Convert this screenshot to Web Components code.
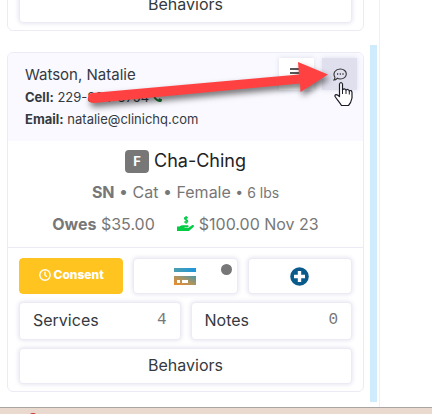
<!DOCTYPE html>
<html lang="en">
<head>
<meta charset="utf-8">
<meta name="viewport" content="width=device-width, initial-scale=1">
<title>Patients</title>
<style>
  html, body { height: 100%; margin: 0; }
  body { font: 16px/24px Inter, "Liberation Sans", sans-serif; color: #343a40; background: #fff; }
</style>
</head>
<body>
<patient-board>
  <patient-card>
    <action-grid slot="actions">
      <action-button wide>Behaviors</action-button>
    </action-grid>
  </patient-card>
  <patient-card>
    <owner-header slot="header" name="Watson, Natalie" cell="229-834-3754" email="natalie@clinichq.com"></owner-header>
    <pet-summary slot="summary" code="F" name="Cha-Ching"></pet-summary>
    <action-grid slot="actions">
      <action-button kind="consent">
        <svg width="12" height="12" viewBox="0 0 12 12" fill="none" stroke="#fff" stroke-width="1.4"><circle cx="6" cy="6" r="5.2"/><path d="M6 2.8V6.2L8 7.8"/></svg>
        Consent
      </action-button>
      <action-button kind="icon" label="Payment card" dot>
        <svg width="22" height="17" viewBox="0 0 22 17">
          <defs>
            <linearGradient id="top" x1="0" y1="0" x2="1" y2="0"><stop offset="0" stop-color="#4d9fae"/><stop offset="1" stop-color="#1f96dc"/></linearGradient>
            <linearGradient id="low" x1="0" y1="1" x2="1" y2="0"><stop offset="0" stop-color="#f28c28"/><stop offset=".5" stop-color="#ae9460"/><stop offset="1" stop-color="#4a97a8"/></linearGradient>
          </defs>
          <path d="M0 0H22V4H0z" fill="url(#top)"/>
          <path d="M0 8H22V17H0z" fill="url(#low)"/>
          <path d="M3 12H6V15H3zM8 12H14V15H8z" fill="#fff"/>
        </svg>
      </action-button>
      <action-button kind="icon" label="Add">
        <svg width="19" height="19" viewBox="0 0 19 19"><circle cx="9.5" cy="9.5" r="9.3" fill="#0b5a8c"/><path d="M7.8 4H11.2V7.8H15V11.2H11.2V15H7.8V11.2H4V7.8H7.8z" fill="#fff"/></svg>
      </action-button>
      <action-button half count="4">Services</action-button>
      <action-button half count="0">Notes</action-button>
      <action-button wide>Behaviors</action-button>
    </action-grid>
  </patient-card>
</patient-board>

<script>
const define = (tag, render) => customElements.define(tag, class extends HTMLElement {
  connectedCallback() {
    if (this.shadowRoot) return;
    this.attachShadow({ mode: "open" }).innerHTML = render(this);
  }
});

define("action-button", (el) => {
  const count = el.getAttribute("count");
  const label = el.getAttribute("label");
  return `
<style>
  :host { display: block; grid-column: span 4; }
  :host([half]) { grid-column: span 6; }
  :host([wide]) { grid-column: span 12; }
  button {
    box-sizing: border-box; width: 100%; height: 36px; padding: 0 13px 2px;
    display: flex; align-items: center; justify-content: center;
    position: relative; font: inherit; color: inherit; cursor: pointer;
    background: #fff; border: 1px solid #ebebf5; border-radius: 4px;
    box-shadow: 0 0 5px #dedeec;
  }
  :host([half]) button { height: 38px; justify-content: space-between; }
  :host([kind="icon"]) button { padding-bottom: 0; }
  :host([kind="consent"]) button {
    font-size: 12px; font-weight: 800; color: #fff;
    background: #ffc41f; border-color: #ffc41f; box-shadow: none;
  }
  .label { display: flex; align-items: center; gap: 3px; }
  .count { font-family: "Liberation Mono", monospace; color: #777; }
  .dot { position: absolute; top: 5px; right: 5px; width: 11px; height: 11px; border-radius: 50%; background: #777; }
</style>
<button type="button"${label ? ` aria-label="${label}"` : ""}>
  <span class="label"><slot></slot></span>
  ${count ? `<span class="count">${count}</span>` : ""}
  ${el.hasAttribute("dot") ? `<span class="dot"></span>` : ""}
</button>`;
});

define("action-grid", () => `
<style>
  :host { display: grid; grid-template-columns: repeat(12, 1fr); gap: 8px 10px; padding: 10px 11px 7px; }
</style>
<slot></slot>`);

define("owner-header", (el) => `
<style>
  :host { display: flex; justify-content: space-between; padding: 5px 6px 11px 17px; background: #f9f9ff; font-size: 13px; line-height: 22px; }
  .who { padding-top: 6px; }
  .name { font-size: 15px; }
  .tools { display: flex; gap: 8px; }
  .tools button { width: 35px; height: 32px; padding: 0; border: 0; background: #fff; box-shadow: 0 0 5px #dedeec; display: grid; place-items: center; }
  .tools .chat { background: #e0dfee; }
  b { font-weight: 700; }
</style>
<div class="who">
  <div class="name">${el.getAttribute("name")}</div>
  <div><b>Cell:</b> ${el.getAttribute("cell")}
    <svg width="9" height="9" viewBox="0 0 512 512" fill="#1c7a35"><path d="M164 25c-8-19-29-29-48-23L28 26C11 31 0 47 0 64c0 247 201 448 448 448 18 0 33-12 38-29l24-88c6-19-5-40-23-48l-96-40c-16-7-35-2-46 12l-41 49c-70-33-127-90-160-160l49-41c14-11 19-29 12-46z"/></svg>
  </div>
  <div><b>Email:</b> ${el.getAttribute("email")}</div>
</div>
<div class="tools">
  <button type="button" aria-label="Menu">
    <svg width="14" height="14" viewBox="0 0 14 14" stroke="#222" stroke-width="1.4"><path d="M0 2H12M0 6H12M0 10H12"/></svg>
  </button>
  <button type="button" class="chat" aria-label="Messages">
    <svg width="14" height="13" viewBox="0 0 14 13" fill="none" stroke="#333" stroke-width="1.1"><path d="M1 12C2 11 2 10 1.8 9C-.5 5 2.5 1 7.3 1C11 1 13.3 3.4 13.3 6C13.3 9 10.7 11 7.3 11C6 11 5 10.7 4.2 10.3C3.3 11.3 2.2 12 1 12z"/><path d="M4 6H5.2M6.7 6H7.9M9.4 6H10.6" stroke-width="1.3"/></svg>
  </button>
</div>`);

define("pet-summary", (el) => `
<style>
  :host { display: flex; flex-direction: column; align-items: center; gap: 7px; padding: 8px 0 11px; color: #777; border-bottom: 1px solid #ebebf5; }
  .row { display: flex; align-items: center; line-height: 24px; }
  .name { gap: 5px; font-size: 18px; color: #222; }
  .badge { width: 24px; line-height: 23px; border-radius: 4px; background: #777; color: #fff; font-size: 13px; font-weight: 700; text-align: center; }
  .money { gap: 22px; }
  .paid { display: flex; align-items: center; gap: 5px; }
  small { font-size: 14px; }
  b { font-weight: 700; }
</style>
<div class="row name"><span class="badge">${el.getAttribute("code")}</span><span>${el.getAttribute("name")}</span></div>
<div class="row"><span><b>SN</b> • Cat • Female <small>• 6 lbs</small></span></div>
<div class="row money">
  <span><b>Owes</b> $35.00</span>
  <span class="paid">
    <svg width="17" height="16" viewBox="0 0 17 16" fill="#0c4"><path d="M0 10.5H2.5C4 9.2 5.5 9 7 9.3H10.5C12 9.3 12 11.2 10.5 11.2H7.5V11.8H11.5L15 9.3C16.5 8.5 17.6 10 16.5 11L12.5 14.5Q12 15 11 15H0z"/><path d="M10.8 2C9.5 1 7.5 1.3 7.5 2.6C7.5 4.2 10.7 3.5 10.7 5.2C10.7 6.7 8.4 6.7 7.2 5.8M9.1 0V7.8" fill="none" stroke="#0c4" stroke-width="1.3"/></svg>
    <span>$100.00 Nov 23</span>
  </span>
</div>`);

define("patient-card", () => `
<style>
  :host { display: block; flex: none; border: 1px solid #ebebf5; border-radius: 6px; background: #fff; overflow: hidden; }
</style>
<slot name="header"></slot><slot name="summary"></slot><slot name="actions"></slot>`);

define("pointer-note", () => `
<style>
  :host { position: absolute; top: 0; left: 0; pointer-events: none; }
  svg { display: block; }
  .arrow { filter: drop-shadow(2px 4px 3px #0008); }
</style>
<svg width="370" height="120" viewBox="0 0 370 120">
  <path class="arrow" fill="#ff4141" d="M92 93L299 74.5L298 62L328 74.5L300.5 92L300 83.5L94 103Q88 103 88 98Q88 93.5 92 93z"/>
  <path fill="#fff" stroke="#1c1c28" stroke-width="1.2" stroke-linejoin="round" d="M339.5 84Q341 81 342.500 84V90Q344.500 87.500 346 90.300Q348 88.300 349.300 91Q351.500 89.500 352 92.500V98Q351 103 348.500 105.500H341.500C339.500 102 337 99.500 335 96.500C334.500 94 337 94 339.500 96.500z"/>
  <path fill="none" stroke="#1c1c28" d="M342.5 90V94M346 90.5V94M349.3 91V94.5"/>
</svg>`);

define("patient-board", () => `
<style>
  :host { display: grid; grid-template: 1fr auto / 1fr 52px; height: 100vh; overflow: hidden; }
  .list { display: flex; flex-direction: column; justify-content: flex-end; gap: 21px; padding: 0 6px 15px 7px; min-height: 0; overflow: hidden; }
  .scroller { display: grid; grid-template-columns: 1fr auto; min-height: 0; border-right: 1px solid #efeff7; }
  .track { width: 7px; margin: 45px 2px 5px 0; background: #ceecfb; }
  .edge { grid-column: 1 / -1; height: 6px; border-top: 1px solid #aaa5a3; background: #ead9cf; overflow: hidden; padding-left: 28px; }
  .edge svg { display: block; }
</style>
<div class="scroller">
  <main class="list"><slot></slot></main>
  <div class="track"></div>
</div>
<div></div>
<footer class="edge"><svg width="10" height="6" viewBox="0 0 10 6"><circle cx="5" cy="9" r="4" fill="#c33"/></svg></footer>
<pointer-note></pointer-note>`);
</script>
</body>
</html>
